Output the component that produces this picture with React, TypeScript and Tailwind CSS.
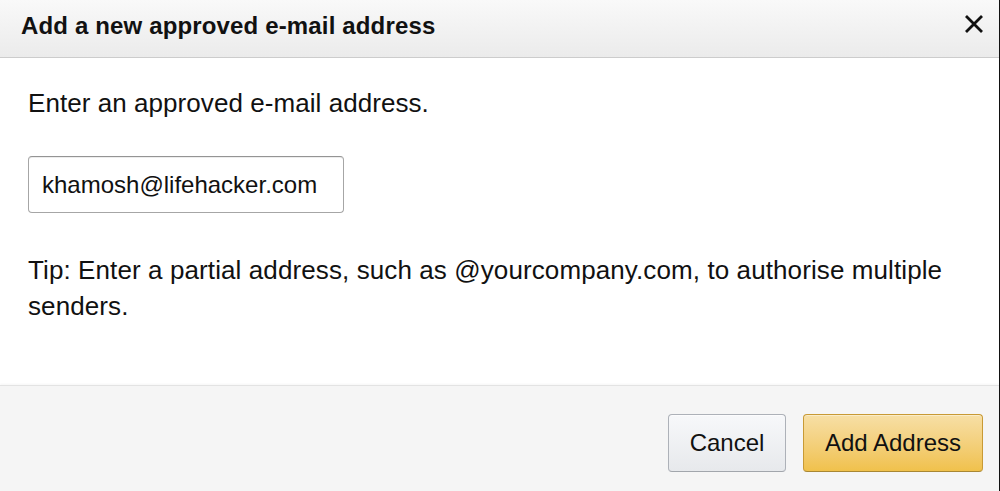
import React from "react"

const font = { fontFamily: '"Liberation Sans", Arial, sans-serif' }

function CloseIcon() {
  return (
    <svg width="20" height="18" viewBox="0 0 20 18" aria-hidden="true">
      <path d="M2 1 L18 17 M18 1 L2 17" stroke="#111" strokeWidth="2.8" strokeLinecap="butt" />
    </svg>
  )
}

export default function App() {
  return (
    <div
      className="w-[1000px] h-[491px] flex flex-col bg-white text-[#111] border-r border-[#111] overflow-hidden"
      style={font}
    >
      {/* header */}
      <div className="h-[58px] shrink-0 flex items-start justify-between pl-[21px] pr-[14px] pt-[12px] bg-gradient-to-b from-[#f9f9f9] to-[#ebebeb] border-b border-[#cccccc]">
        <h1 className="text-[24px] leading-[28px] font-bold tracking-[0.15px]">Add a new approved e-mail address</h1>
        <button className="mt-[3px] mr-[1px]" aria-label="Close">
          <CloseIcon />
        </button>
      </div>

      {/* body */}
      <div className="flex-1 pl-[28px] pr-[40px] pt-[30px]">
        <p className="text-[26px] leading-[30px] tracking-[0.06px]">Enter an approved e-mail address.</p>
        <input
          className="mt-[38px] w-[316px] h-[57px] px-[13px] text-[24px] rounded-[4px] border border-[#a6a6a6] border-t-[#949494] outline-none shadow-[inset_0_1px_0_rgba(0,0,0,0.07)]"
          defaultValue="khamosh@lifehacker.com"
          style={font}
        />
        <p className="mt-[39px] text-[26px] leading-[36px] tracking-[0.1px] max-w-[930px]">
          Tip: Enter a partial address, such as @yourcompany.com, to authorise multiple senders.
        </p>
      </div>

      {/* footer */}
      <div className="h-[106px] shrink-0 flex items-start justify-end gap-[17px] pt-[28px] pr-[16px] bg-[#f5f5f5] border-t border-[#e3e3e3] shadow-[0_-1px_2px_rgba(0,0,0,0.04)]">
        <button className="h-[58px] w-[118px] rounded-[4px] text-[24px] border border-[#adb1b8] border-b-[#a2a6ac] bg-gradient-to-b from-[#f7f8fa] to-[#e7e9ec] shadow-[inset_0_1px_0_rgba(255,255,255,0.6)]">
          Cancel
        </button>
        <button className="h-[58px] w-[180px] rounded-[4px] text-[24px] border border-[#c89a35] border-b-[#a88734] bg-gradient-to-b from-[#f7dfa5] to-[#f0c14b] shadow-[inset_0_1px_0_rgba(255,255,255,0.4)]">
          Add Address
        </button>
      </div>
    </div>
  )
}
